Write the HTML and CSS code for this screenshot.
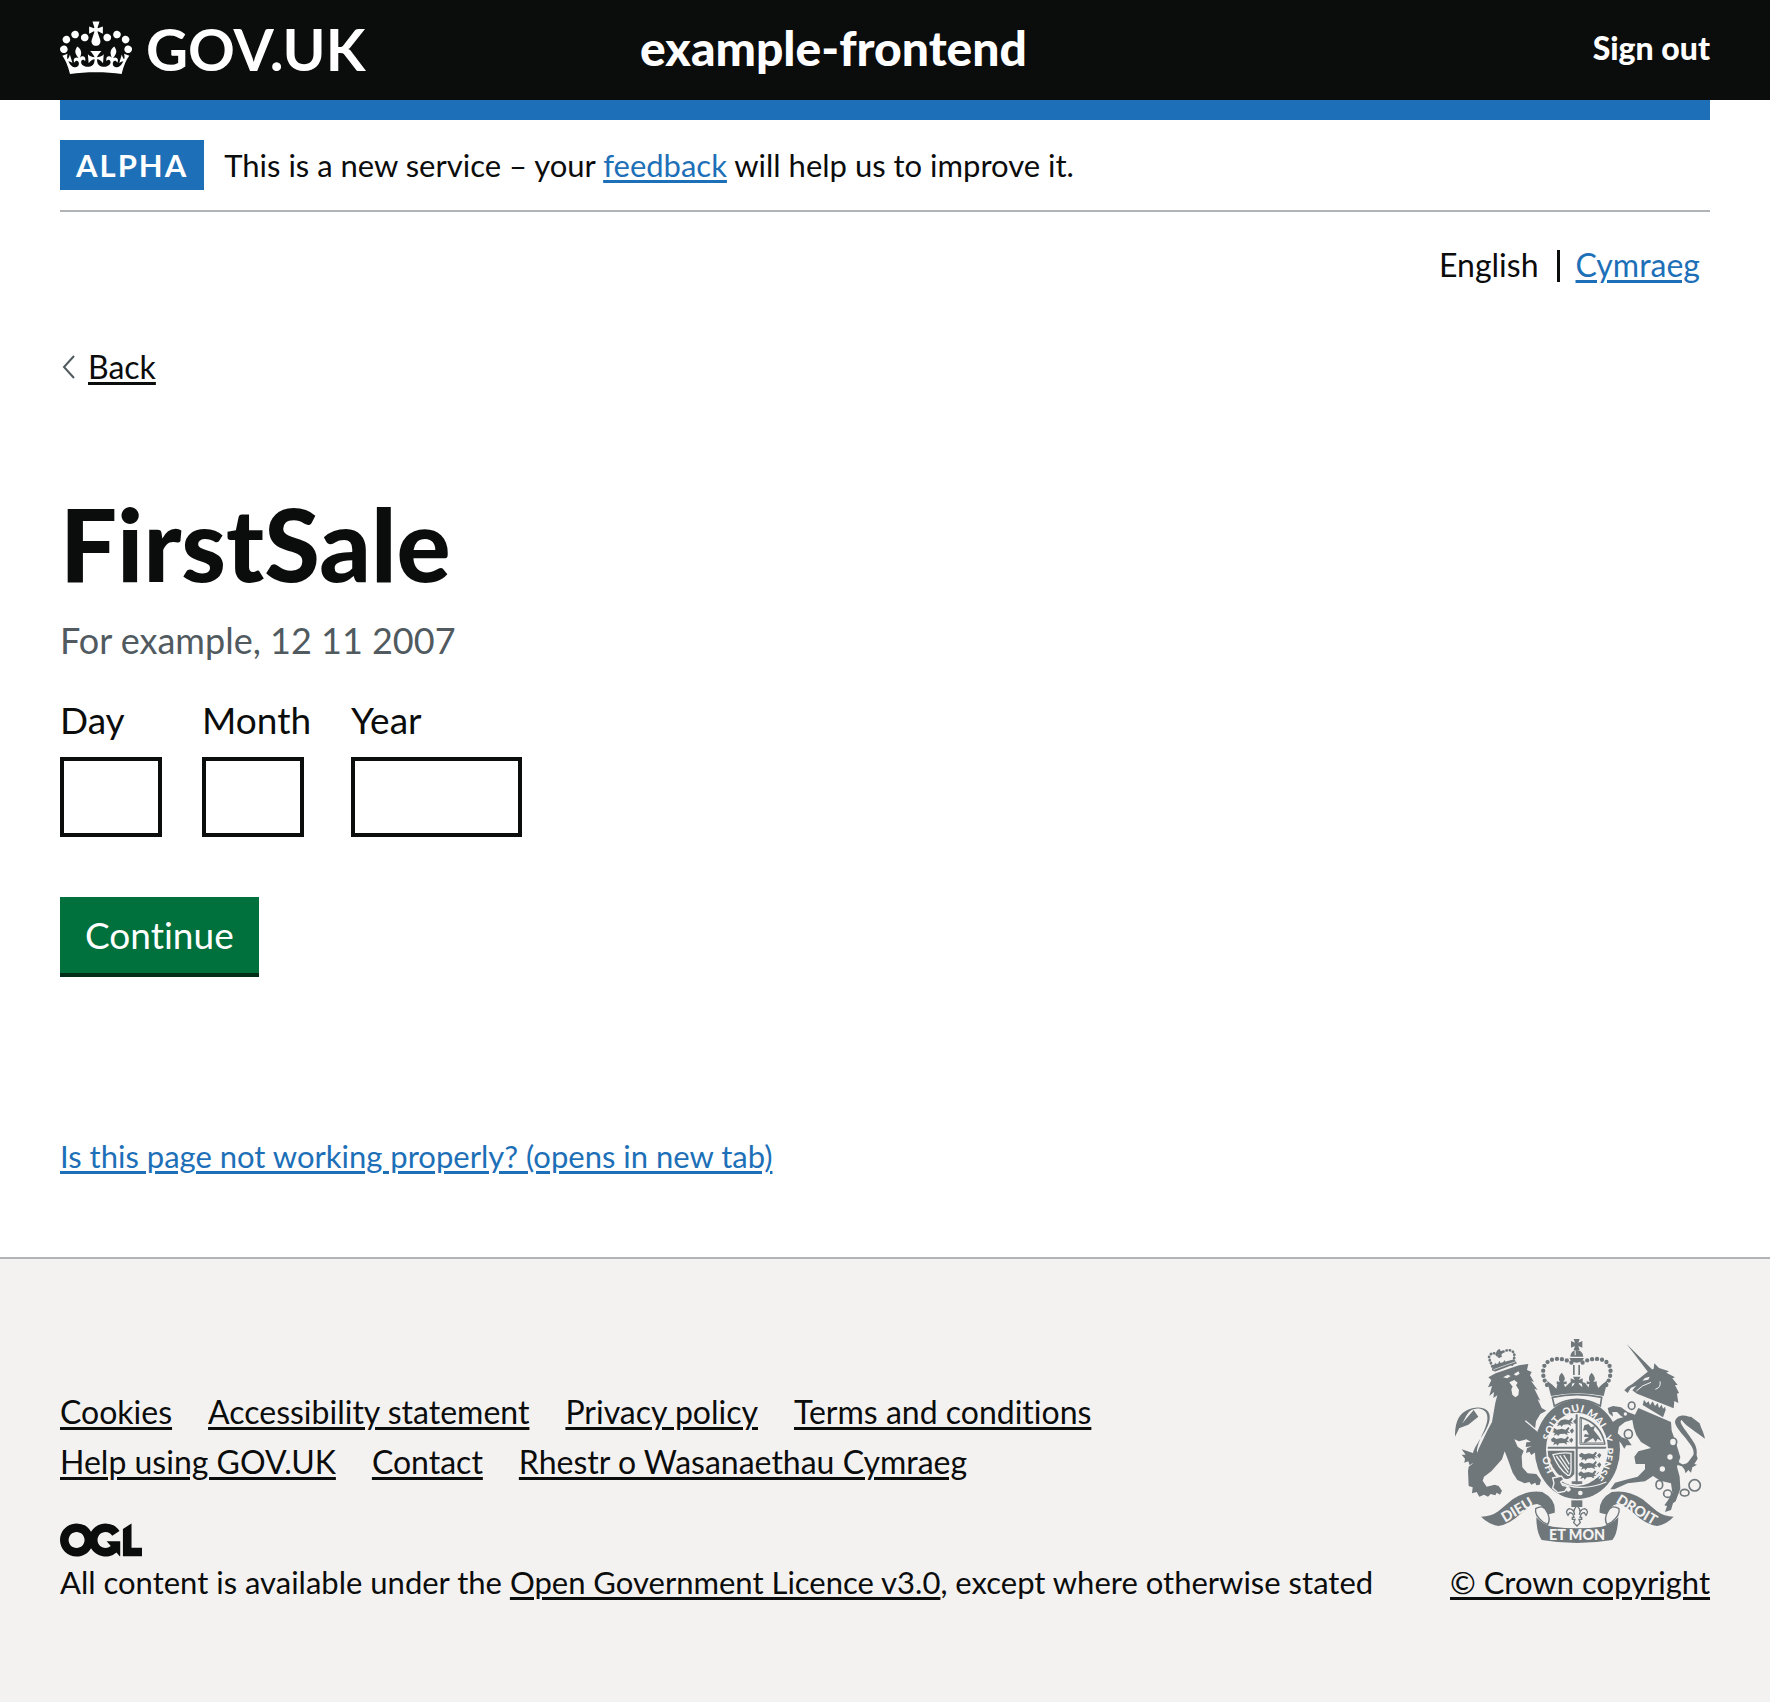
FILE: index.html
```html
<!DOCTYPE html>
<html lang="en">
<head>
<meta charset="utf-8">
<meta name="viewport" content="width=device-width, initial-scale=1">
<title>FirstSale - example-frontend - GOV.UK</title>
<link rel="stylesheet" href="styles.css">
</head>
<body>
<header class="header">
  <div class="header-row container">
    <a class="logo" href="#">
      <svg class="logo-crown" viewBox="0 0 132 97" aria-hidden="true"><path fill="currentColor" d="M25 30.2c3.5 1.5 7.7-.2 9.1-3.7 1.5-3.6-.2-7.8-3.9-9.2-3.6-1.4-7.6.3-9.1 3.9-1.4 3.5.3 7.5 3.9 9zM9 39.5c3.6 1.5 7.8-.2 9.2-3.7 1.5-3.6-.2-7.8-3.9-9.1-3.6-1.5-7.6.2-9.1 3.8-1.4 3.5.3 7.5 3.8 9zM4.4 57.2c3.5 1.5 7.7-.2 9.1-3.8 1.5-3.6-.2-7.7-3.9-9.1-3.5-1.5-7.6.3-9.1 3.8-1.4 3.5.3 7.6 3.9 9.1zm38.3-21.4c3.5 1.5 7.7-.2 9.1-3.8 1.5-3.6-.2-7.7-3.9-9.1-3.6-1.5-7.6.3-9.1 3.8-1.3 3.6.4 7.7 3.9 9.1zm64.4-5.6c-3.6 1.5-7.8-.2-9.1-3.7-1.5-3.6.2-7.8 3.8-9.2 3.6-1.4 7.7.3 9.2 3.9 1.3 3.5-.4 7.5-3.9 9zm15.9 9.3c-3.6 1.5-7.7-.2-9.1-3.7-1.5-3.6.2-7.8 3.7-9.1 3.6-1.5 7.7.2 9.2 3.8 1.5 3.5-.3 7.5-3.8 9zm4.7 17.7c-3.6 1.5-7.8-.2-9.2-3.8-1.5-3.6.2-7.7 3.9-9.1 3.6-1.5 7.7.3 9.2 3.8 1.3 3.5-.4 7.6-3.9 9.1zM89.3 35.8c-3.6 1.5-7.8-.2-9.2-3.8-1.4-3.6.2-7.7 3.9-9.1 3.6-1.5 7.7.3 9.2 3.8 1.4 3.6-.3 7.7-3.9 9.1zM69.7 17.7l8.9 4.7V9.3l-8.9 2.8c-.2-.3-.5-.6-.9-.9L72.4 0H59.6l3.5 11.2c-.3.3-.6.5-.9.9l-8.8-2.8v13.1l8.8-4.7c.3.3.6.7.9.9l-5 15.4v.1c-.2.8-.4 1.6-.4 2.4 0 4.1 3.1 7.5 7 8.1h.2c.3 0 .7.1 1 .1.4 0 .7 0 1-.1h.2c4-.6 7.1-4.1 7.1-8.1 0-.8-.1-1.7-.4-2.4V34l-5.1-15.4c.4-.2.7-.6 1-.9zM66 92.8c16.9 0 32.8 1.1 47.1 3.2 4-16.9 8.9-26.7 14-33.5l-9.6-3.4c1 4.9 1.1 7.2 0 10.2-1.5-1.4-3-4.3-4.2-8.7L108.6 76c2.8-2 5-3.2 7.5-3.3-4.4 9.4-10 11.9-13.6 11.2-4.3-.8-6.3-4.6-5.6-7.9 1-4.7 5.7-5.9 8-.5 4.3-8.7-3-11.4-7.6-8.8 7.1-7.2 7.9-13.5 2.1-21.1-8 6.1-8.1 12.3-4.5 20.8-4.7-5.4-12.1-2.5-9.5 6.2 3.4-5.2 7.9-2 7.2 3.1-.6 4.3-6.4 7.8-13.5 7.2-10.3-.9-10.9-8-11.2-13.8 2.5-.5 7.1 1.8 11 7.3L80.2 60c-4.1 4.4-8 5.3-12.3 5.4 1.4-4.4 8-11.6 8-11.6H55.5s6.4 7.2 7.9 11.6c-4.2-.1-8-1-12.3-5.4l1.4 16.4c3.9-5.5 8.5-7.7 10.9-7.3-.3 5.8-.9 12.8-11.1 13.8-7.2.6-12.9-2.9-13.5-7.2-.7-5 3.8-8.3 7.1-3.1 2.7-8.7-4.6-11.6-9.4-6.2 3.7-8.5 3.6-14.7-4.6-20.8-5.8 7.6-5 13.9 2.2 21.1-4.7-2.6-11.9.1-7.7 8.8 2.3-5.5 7.1-4.2 8.1.5.7 3.3-1.3 7.1-5.7 7.9-3.5.7-9-1.8-13.5-11.2 2.5.1 4.7 1.3 7.5 3.3l-4.7-15.4c-1.2 4.4-2.7 7.2-4.3 8.7-1.1-3-.9-5.3 0-10.2l-9.5 3.4c5 6.9 9.9 16.7 14 33.5 14.8-2.1 30.8-3.2 47.7-3.2z"/></svg>
      <span>GOV.UK</span>
    </a>
    <a class="service-name" href="#">example-frontend</a>
    <a class="sign-out" href="#">Sign out</a>
  </div>
</header>

<div class="container">
  <div class="phase-banner">
    <strong class="phase-tag">ALPHA</strong>
    <span>This is a new service – your <a class="link" href="#">feedback</a> will help us to improve it.</span>
  </div>
  <nav class="languages" aria-label="Language switcher">
    <ul class="language-list">
      <li>English</li>
      <li class="language-other"><a class="link" href="#" lang="cy">Cymraeg</a></li>
    </ul>
  </nav>
  <a class="back-link" href="#">
    <svg class="back-arrow" viewBox="0 0 16 24" aria-hidden="true"><path d="M14 1 4 12l10 11" fill="none" stroke="#505a5f" stroke-width="2"/></svg>
    <span class="back-text">Back</span>
  </a>

  <main>
    <form action="#">
      <fieldset class="fieldset" aria-describedby="date-hint">
        <legend class="legend"><h1 class="heading">FirstSale</h1></legend>
        <div class="hint" id="date-hint">For example, 12 11 2007</div>
        <div class="date">
          <div class="date-item"><label for="day">Day</label><input class="input input-2" id="day" name="day" type="text" inputmode="numeric"></div>
          <div class="date-item"><label for="month">Month</label><input class="input input-2" id="month" name="month" type="text" inputmode="numeric"></div>
          <div class="date-item"><label for="year">Year</label><input class="input input-4" id="year" name="year" type="text" inputmode="numeric"></div>
        </div>
      </fieldset>
      <button class="button" type="submit">Continue</button>
    </form>
    <p class="report"><a class="link" href="#">Is this page not working properly? (opens in new tab)</a></p>
  </main>
</div>

<footer class="footer">
  <div class="footer-row container">
    <div class="footer-main">
      <ul class="footer-links">
        <li><a href="#">Cookies</a></li>
        <li><a href="#">Accessibility statement</a></li>
        <li><a href="#">Privacy policy</a></li>
        <li><a href="#">Terms and conditions</a></li>
        <li><a href="#">Help using GOV.UK</a></li>
        <li><a href="#">Contact</a></li>
        <li><a href="#" lang="cy">Rhestr o Wasanaethau Cymraeg</a></li>
      </ul>
      <svg class="ogl" viewBox="0 0 483.2 195.7" aria-hidden="true"><path fill="currentColor" d="M421.5 142.8V.1l-50.7 32.3v161.1h112.4v-50.7zm-122.3-9.6A47.12 47.12 0 0 1 221 97.8c0-26 21.1-47.1 47.1-47.1 16.7 0 31.4 8.7 39.7 21.8l42.7-27.2A97.63 97.63 0 0 0 268.1 0c-36.5 0-68.3 20.1-85.1 49.7A98 98 0 0 0 97.8 0C43.9 0 0 43.9 0 97.8s43.9 97.8 97.8 97.8c36.5 0 68.3-20.1 85.1-49.7a97.76 97.76 0 0 0 149.6 25.4l19.4 22.2h3v-87.8h-80l24.3 27.5zM97.8 145c-26 0-47.1-21.1-47.1-47.1s21.1-47.1 47.1-47.1 47.1 21.1 47.1 47.1S123.8 145 97.8 145"/></svg>
      <p class="licence">All content is available under the <a href="#">Open Government Licence v3.0</a>, except where otherwise stated</p>
    </div>
    <a class="copyright" href="#">
      <svg class="crest" viewBox="42 57 750 612" aria-hidden="true">
        <defs>
          <path id="garter" d="M409 501A98 114 0 0 1 409 275A98 114 0 0 1 409 501"/>
          <clipPath id="shield"><ellipse cx="408" cy="388" rx="88" ry="105"/></clipPath>
          <g id="lions"><path d="M2 12l8-6 8 5 14-3 12 3 8-8 4 4-6 8 8 6-10-1 2 8-9-5-14 1-6 7-3-6-10 4 4-8-8-2zM56 14l8-7 5 7-6 9z"/></g>
        </defs>
        <g fill="#6f777b">
          <!-- lion -->
          <path d="M142 172l22-12 70-24 28-4-4 18 14 6-5 10 12 20-9-4 20 28-10-4 18 36-8-4 12 26 14 8-18 10-13 22-3 24 14 6 12 18 8 30-1 24-7-4-3 12-10-10-8 5-4-12-12 8-6-10-10 4 3-14 14-6-18 2 2-14 14-1-14-8-22 6-14-6 10 22 18 12-6 16 2 34 16 18 26 2 14 18-4 14-10 2-3-8-12 6-6-8-14 4-22-10-14-22-16-44-8-20-8 24-32 36-22 16-4 12 12 18 24-6 12 4 10 14-6 12-10-6-4 8-14-4-8 8-12-6-14 6-8-14-14 4 2-18-12-4-2-44 2-14 14-10 16-44 26-54 14-26 10-58 6-22-12 8 2-18-14 12 8-30-12 4 10-22z"/>
          <path d="M140 370C100 425 98 395 130 330C152 282 132 264 105 266C76 268 74 300 58 318L42 350C42 316 48 286 75 272C110 254 150 262 146 296C144 335 86 385 97 412C105 420 125 400 140 385zM98 270l14 20-30 24-32 12zM98 400l-36-12 12 16-12 0 10 12-2 12 12-4 4 12 8-6 8 8 14-28z"/>
          <g fill="#f3f2f1">
            <path d="M186 172l15-8 8 4-10 7zM218 163l14-9 4 7-10 6zM205 187l15-7 10 8-5 8 9 14-2 16-9 6-9-8-3-16 4-8z"/>
          </g>
          <path d="M253 302l52 44 18 60" fill="none" stroke="#f3f2f1" stroke-width="4"/>
          <!-- lion crown -->
          <path d="M152 136l68-18 8 12-67 25zM168 92l7-6 4 7 7-1v8l-6 1 3 10-9 2-2-10-8 2 1-7z"/>
          <path d="M157 149c-6-22-20-38-8-46s18 0 24 8c4-14 22-22 34-20 18 4 15 22 6 44" fill="none" stroke="#6f777b" stroke-width="8" stroke-linecap="round" stroke-dasharray="1 9"/>
          <path d="M160 142l2-14 8 8 5-14 6 12 10-14 4 12 10-10 6 12z"/>
          <path d="M157 149l67-24" stroke="#f3f2f1" stroke-width="2"/>
          <!-- garter -->
          <ellipse cx="409" cy="388" rx="128" ry="149"/>
          <ellipse cx="408" cy="388" rx="93" ry="110" fill="#f3f2f1"/>
          <g clip-path="url(#shield)">
            <path d="M312 380h92V278h6v102h92v6h-92v110h-6V386h-92z"/>
            <use href="#lions" x="340" y="290"/><use href="#lions" x="330" y="318"/><use href="#lions" x="328" y="346"/>
            <use href="#lions" x="412" y="392"/><use href="#lions" x="412" y="420"/><use href="#lions" x="410" y="448"/>
            <path d="M417 292v81h75M421 296v73h67" fill="none" stroke="#6f777b" stroke-width="3"/>
            <path d="M417 292q62 16 75 81" fill="none" stroke="#6f777b" stroke-width="5"/>
            <path d="M430 316l12-4 8 10 12-4-4 12 16 20 8 14-12-8-6 10-8-12-18 12-10 4 4-12 12-6-16-2 4-8 12 2-8-14-10 2z"/>
            <path d="M316 392h84v70q-18 24-38 10-34-26-46-80z"/>
            <path d="M336 404q30-8 54-4v52q-2 16-10 14-30-24-44-62zM346 408l36 50M356 406l28 42M368 405l17 28" fill="none" stroke="#f3f2f1" stroke-width="4"/>
            <path d="M392 484h32v12h-32z"/>
          </g>
          <path d="M338 478q74 44 158 8M424 488q34-2 58-30" fill="none" stroke="#f3f2f1" stroke-width="4"/>
          <path d="M335 474l26-6 8 10-10 8 6 10 16 4-10 14-20 4-16-14 4-14z" stroke="#f3f2f1" stroke-width="4"/>
          <circle cx="382" cy="508" r="7" fill="#f3f2f1"/><circle cx="418" cy="519" r="7" fill="#f3f2f1"/>
          <g class="motto" fill="#f3f2f1" text-anchor="middle">
            <text><textPath href="#garter" startOffset="18%">HO</textPath></text>
            <text><textPath href="#garter" startOffset="35%">SOIT</textPath></text>
            <text><textPath href="#garter" startOffset="48%">QUI</textPath></text>
            <text><textPath href="#garter" startOffset="60%">MAL</textPath></text>
            <text><textPath href="#garter" startOffset="70%">Y</textPath></text>
            <text><textPath href="#garter" startOffset="82%">PENSE</textPath></text>
          </g>
          <!-- royal crown -->
          <path d="M334 232q74-16 148 0l-4 26q-34-20-70-20t-68 20z" fill="#f3f2f1" stroke="#6f777b" stroke-width="5"/>
          <path d="M330 228l-12-46 16 12 12 12 4-16 14-4 8 16 14-14 8-2-2 14 8-6h16l8 8-2-16 10 2 12 16 8-18 14 4 6 14 10-10 18-14-12 48q-78-16-158 0z"/>
          <path d="M362 158q16 16 5 28l10-2v9l-8-1 3 12h-20l3-12-8 1v-9l10 2q-9-14 5-28zM452 158q16 16 5 28l10-2v9l-8-1 3 12h-20l3-12-8 1v-9l10 2q-9-14 5-28zM396 170h23l-6 10 12-5v17l-12-4 5 14h-22l5-14-12 4v-17l12 5zM396 135h5v30h-5zM412 135h5v30h-5z"/>
          <path d="M398 57h18l-4 11 12-5v20l-12-5 4 12h-18l4-12-12 5V63l12 5zM388 110q2-20 19-20t20 20zM385 114h44q-6 14-22 14t-22-14z"/>
          <path d="M401 92h3v14h-3z" fill="#f3f2f1"/>
          <path d="M318 195C306 178 302 150 312 134C328 112 364 112 392 128M496 195C508 178 513 150 504 134C488 112 452 112 424 128" fill="none" stroke="#6f777b" stroke-width="13" stroke-linecap="round" stroke-dasharray="0 15"/>
          <!-- unicorn -->
          <path d="M557 72l76 76-12 8zM574 192l50-40 14-6 2-16 14 14 30 10-8 4 26 14-8 3 16 20-8 0 12 24-6 2 4 28-12-6-2 22-110-44-14-10 12-14-16 6-10 16-10-8 10-10-14 8z"/>
          <path d="M604 182l8-8 14-4-4 9z" fill="#f3f2f1"/>
          <path d="M586 213q16-18 44-26M657 184q4 18-14 24" fill="none" stroke="#f3f2f1" stroke-width="3"/>
          <path d="M598 232l94 46-8 24-94-46z" fill="#f3f2f1"/>
          <path d="M605 255l4-16 7 10 7-5 4 12 8-12 7 14 8-9 4 15 8-10 4 12 6-6 2 10-8 22z"/>
          <path d="M592 264L690 306L692 332L706 372L718 412L708 440L716 470L718 506L704 544L696 550L690 570L672 576L678 558L670 556L680 542L694 518L690 490L658 482L636 468L612 484L560 490L520 508L508 508L522 488L560 478L590 470L612 448L612 432L584 432L580 410L592 394L630 384L600 366L586 345L578 322L574 300L556 296L540 288L528 276L514 276L516 290L504 280L500 264L516 258L540 262L560 276L582 284Z"/>
          <path d="M580 298L552 306L534 320L530 340L542 352L560 358L572 376L556 376L550 386L540 370L524 352L514 320L496 332L506 312L530 296L560 288Z"/>
          <path d="M706 420C735 446 738 430 757 405C768 378 704 332 702 306C706 282 736 282 758 298C780 320 786 330 792 356C770 338 736 320 722 300C708 306 744 340 760 370C782 410 752 460 706 432zM720 436l34-12 12-22 4 14-10 16 8 2-14 8-4 16-8-8-8 10-4-12z"/>
          <path d="M724 292l26 26 40 36-14-44-26-20z"/>
          <g fill="none" stroke="#6f777b" stroke-width="5">
            <circle cx="761" cy="496" r="17"/><ellipse cx="731" cy="518" rx="13" ry="10"/><ellipse cx="680" cy="521" rx="12" ry="11"/><ellipse cx="655" cy="494" rx="10" ry="13"/>
            <g fill="#f3f2f1"><ellipse cx="572" cy="257" rx="10" ry="11"/><ellipse cx="562" cy="342" rx="12" ry="13"/><ellipse cx="696" cy="366" rx="11" ry="12"/></g>
          </g>
          <g fill="#f3f2f1"><circle cx="687" cy="411" r="8"/><circle cx="664" cy="447" r="8"/><circle cx="553" cy="282" r="5"/></g>
          <!-- ribbon -->
          <path d="M120 590Q150 590 172 574L215 538Q260 508 304 516Q346 538 341 578L318 584Q310 556 288 552Q270 552 245 576Q205 614 172 618Q142 612 120 590zM698 590Q670 590 648 574L605 538Q560 508 512 516Q472 538 476 578L500 584Q506 556 528 552Q546 552 574 576Q614 614 648 618Q678 612 698 590z"/>
          <path d="M284 566q24-14 34 10 12 20 2 38l-14-8q-26-20-22-40zM534 566q-24-14-34 10-12 20-2 38l14-8q26-20 22-40z" fill="#f3f2f1" stroke="#6f777b" stroke-width="4"/>
          <path d="M286 592q22 24 50 28 72 10 146 0 28-6 50-28-2 50-18 68-106 18-212 0-16-24-16-68z"/>
          <path d="M391 541h33v20h-33z"/>
          <path d="M408 556q14 16 7 28 2-16 16-18 14 6 4 20l-5-8q-10 0-13 14h5v6h-8l4 10-10 10-10-10 4-10h-8v-6h5q-3-14-13-14l-5 8q-10-14 4-20 14 2 16 18-7-12 7-28z" fill="#f3f2f1" stroke="#6f777b" stroke-width="4"/>
          <g class="ribbon-text" fill="#f3f2f1" text-anchor="middle">
            <text transform="translate(236 582) rotate(-31)">DIEU</text>
            <text transform="translate(580 582) rotate(31)">DROIT</text>
            <text x="408" y="660">ET MON</text>
          </g>
        </g>
      </svg>
      <span>© Crown copyright</span>
    </a>
  </div>
</footer>
</body>
</html>
```
FILE: styles.css
```css
* {
  box-sizing: border-box;
}

body {
  margin: 0;
  background: #fff;
  color: #0b0c0c;
  font: 32px/40px Lato, "Noto Sans", sans-serif;
  font-variant-ligatures: none;
}

a {
  color: inherit;
  text-decoration-thickness: 3px;
  text-underline-offset: 3px;
}

ul,
p,
h1 {
  margin: 0;
  padding: 0;
}

ul {
  list-style: none;
}

.container {
  margin: 0 60px;
}

.link {
  color: #1d70b8;
}

.header {
  height: 100px;
  background: #0b0c0c;
  color: #fff;
}

.header-row {
  display: grid;
  grid-template-columns: minmax(0, 580px) 1fr auto;
  height: 120px;
  border-bottom: 20px solid #1d70b8;
}

.header a {
  font-weight: 700;
  text-decoration: none;
}

.logo {
  display: flex;
  gap: 14px;
  padding-top: 21px;
  font-size: 58px;
  line-height: 56px;
}

.logo-crown {
  width: 72px;
  height: 54px;
}

.header .service-name {
  padding-top: 18px;
  font-size: 48px;
  font-weight: 900;
  line-height: 60px;
}

.header .sign-out {
  padding-top: 28px;
  font-weight: 900;
}

.phase-banner {
  display: flex;
  gap: 20px;
  margin-top: 20px;
  padding: 20px 0;
  border-bottom: 2px solid #b1b4b6;
  font-size: 31px;
  line-height: 50px;
}

.phase-tag {
  padding: 0 16px;
  background: #1d70b8;
  color: #fff;
  letter-spacing: 2px;
}

.language-list {
  display: flex;
  justify-content: flex-end;
  margin-top: 33px;
  padding-right: 10px;
}

.language-other {
  display: flex;
}

.language-other::before {
  content: "";
  width: 3px;
  height: 32px;
  margin: 5px 16px 0 18px;
  background: #0b0c0c;
}

.back-link {
  display: inline-flex;
  align-items: center;
  gap: 12px;
  margin-top: 62px;
  text-decoration: none;
}

.back-text {
  text-decoration: underline 3px;
  text-underline-offset: 3px;
}

.back-arrow {
  width: 16px;
  height: 24px;
}

.fieldset {
  min-width: 0;
  margin: 106px 0 60px;
  padding: 0;
  border: 0;
  font-size: 37px;
  line-height: 50px;
}

.legend {
  padding: 0;
}

.heading {
  font-size: 101px;
  font-weight: 900;
  line-height: 100px;
}

.hint {
  margin: 22px 0 30px;
  color: #505a5f;
  font-size: 36px;
}

.date {
  display: flex;
  gap: 40px;
}

.date-item {
  display: flex;
  flex-direction: column;
  gap: 12px;
}

.input {
  height: 80px;
  padding: 10px;
  border: 4px solid #0b0c0c;
  border-radius: 0;
  font: inherit;
}

.input-2 {
  width: 102px;
}

.input-4 {
  width: 171px;
}

.button {
  display: block;
  height: 76px;
  padding: 0 25px;
  border: 0;
  background: #00703c;
  box-shadow: 0 4px 0 #002d18;
  color: #fff;
  font: inherit;
  font-size: 37px;
}

.report {
  margin: 163px 0 81px;
  font-size: 31px;
}

.footer {
  padding: 80px 0 100px;
  border-top: 2px solid #b1b4b6;
  background: #f3f2f1;
}

.footer-row {
  display: flex;
  align-items: flex-end;
  justify-content: space-between;
}

.footer-links {
  display: flex;
  flex-wrap: wrap;
  gap: 10px 36px;
  max-width: 1100px;
}

.ogl {
  display: block;
  width: 82px;
  height: 34px;
  margin: 41px 0 5px;
}

.licence {
  font-size: 31px;
}

.copyright {
  display: flex;
  flex-direction: column;
  align-items: center;
  gap: 19px;
  font-size: 31px;
}

.crest {
  width: 250px;
  height: 204px;
}

.motto {
  font: 900 31px Lato, sans-serif;
}

.ribbon-text {
  font: 900 43px Lato, sans-serif;
}
```
